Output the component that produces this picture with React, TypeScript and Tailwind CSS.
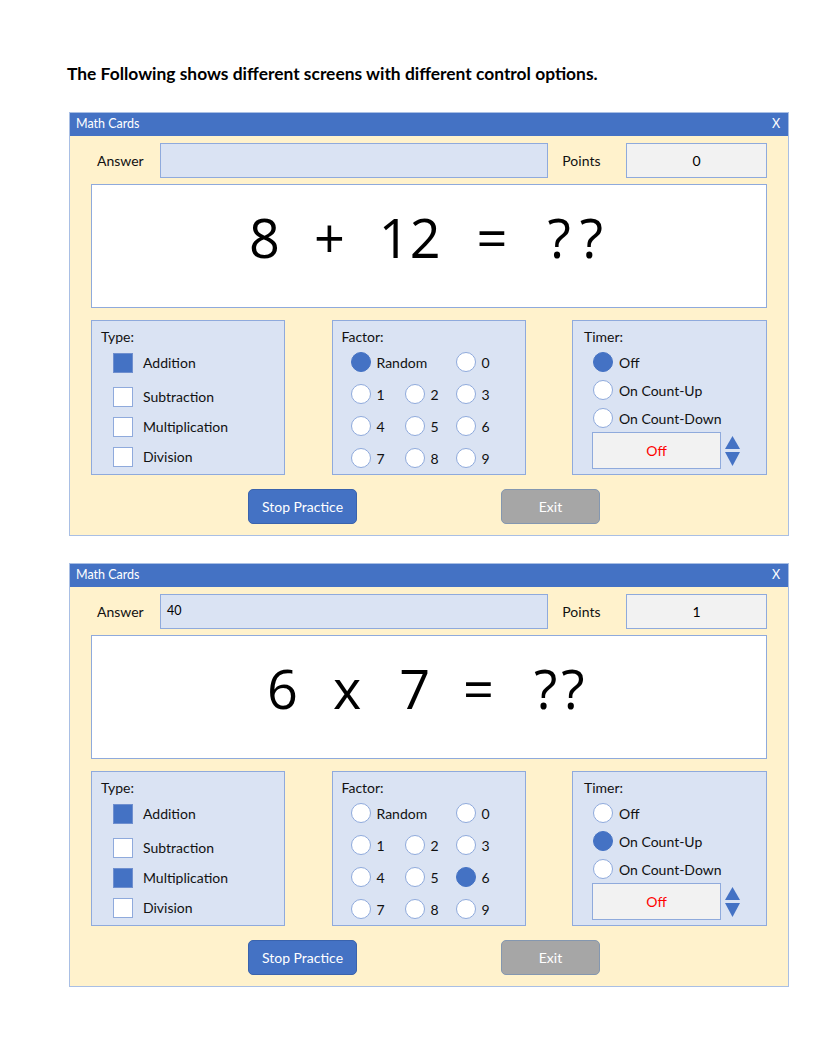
const font = { fontFamily: "Lato, 'Open Sans', sans-serif" };

interface ScreenProps {
  answer: string;
  points: string;
  question: [string, number][];
  types: boolean[];
  factor: string;
  timer: number;
}

const typeNames = ["Addition", "Subtraction", "Multiplication", "Division"];
const factorRows = [
  ["1", "2", "3"],
  ["4", "5", "6"],
  ["7", "8", "9"],
];
const timerNames = ["Off", "On Count-Up", "On Count-Down"];

function Radio({ on }: { on: boolean }) {
  return (
    <span
      className={`inline-block w-[20px] h-[20px] rounded-full shrink-0 ${
        on ? "bg-[#4472c4] border border-[#4472c4]" : "bg-white border-[1.5px] border-[#8faadc]"
      }`}
    />
  );
}

function Check({ on }: { on: boolean }) {
  return (
    <span
      className={`inline-block w-[20px] h-[20px] shrink-0 border ${
        on ? "bg-[#4472c4] border-[#6f8fcf]" : "bg-white border-[#8faadc]"
      }`}
    />
  );
}

function Screen({ answer, points, question, types, factor, timer }: ScreenProps) {
  return (
    <div className="ml-[69px] w-[720px] border border-[#a9bfe4] bg-[#fff2cc]">
      {/* Title bar */}
      <div className="h-[23px] bg-[#4472c4] flex items-center justify-between px-[6px] text-white text-[12.5px]">
        <span>Math Cards</span>
        <span className="pr-[2px]">X</span>
      </div>

      <div className="px-[21px] pt-[7px] pb-[11px]">
        {/* Answer row */}
        <div className="flex items-center h-[35px]">
          <span className="w-[69px] pl-[6px] text-[14px] text-[#111]">Answer</span>
          <div className="w-[389px] h-[35px] bg-[#dae3f3] border border-[#8faadc] flex items-center px-[6px] text-[12.5px] text-black">
            {answer}
          </div>
          <span className="ml-[14px] w-[64px] text-[14px] text-[#111]">Points</span>
          <div className="w-[141px] h-[35px] bg-[#f2f2f2] border border-[#8faadc] flex items-center justify-center text-[14px] text-black">
            {points}
          </div>
        </div>

        {/* Question display */}
        <div className="mt-[6px] h-[124px] bg-white border border-[#8faadc] flex items-start">
          <div
            className="flex text-[54px] text-black leading-none pt-[25px]"
            style={{ fontFamily: "'Open Sans', 'Noto Sans', sans-serif" }}
          >
            {question.map(([s, left], i) => (
              <span key={i} style={{ marginLeft: left }}>
                {s}
              </span>
            ))}
          </div>
        </div>

        {/* Option panels */}
        <div className="mt-[12px] flex justify-between">
          <div className="w-[194px] h-[155px] bg-[#dae3f3] border border-[#8faadc] pl-[9px] pt-[7px]">
            <div className="text-[14px] text-[#111] leading-[18px]">Type:</div>
            <div className="mt-[7px] flex flex-col gap-[11px] pl-[12px]">
              {typeNames.map((t, i) => (
                <div
                  key={t}
                  className={`flex items-center gap-[10px] h-[19px] text-[14px] text-[#111] ${i === 0 ? "mb-[4px]" : ""}`}
                >
                  <Check on={types[i]} />
                  <span>{t}</span>
                </div>
              ))}
            </div>
          </div>

          <div className="w-[194px] h-[155px] bg-[#dae3f3] border border-[#8faadc] pl-[9px] pt-[7px]">
            <div className="text-[14px] text-[#111] leading-[18px]">Factor:</div>
            <div className="mt-[6px] pl-[9px] flex flex-col gap-[12px]">
              <div className="flex items-center h-[20px] text-[14px] text-[#111]">
                <div className="w-[105px] flex items-center gap-[6px]">
                  <Radio on={factor === "Random"} />
                  <span>Random</span>
                </div>
                <div className="flex items-center gap-[6px]">
                  <Radio on={factor === "0"} />
                  <span>0</span>
                </div>
              </div>
              {factorRows.map((row) => (
                <div key={row[0]} className="flex items-center h-[20px] text-[14px] text-[#111]">
                  {row.map((n, j) => (
                    <div key={n} className={`${j === 0 ? "w-[54px]" : j === 1 ? "w-[51px]" : ""} flex items-center gap-[6px]`}>
                      <Radio on={factor === n} />
                      <span>{n}</span>
                    </div>
                  ))}
                </div>
              ))}
            </div>
          </div>

          <div className="w-[195px] h-[155px] bg-[#dae3f3] border border-[#8faadc] pl-[11px] pt-[7px]">
            <div className="text-[14px] text-[#111] leading-[18px]">Timer:</div>
            <div className="mt-[6px] pl-[9px] flex flex-col gap-[8px]">
              {timerNames.map((t, i) => (
                <div key={t} className="flex items-center gap-[6px] h-[20px] text-[14px] text-[#111]">
                  <Radio on={timer === i} />
                  <span>{t}</span>
                </div>
              ))}
            </div>
            <div className="mt-[4px] pl-[8px] flex items-center gap-[3px]">
              <div className="w-[129px] h-[37px] bg-[#f2f2f2] border border-[#8faadc] flex items-center justify-center text-[14px] text-[#ff0000]">
                Off
              </div>
              <svg width="17" height="32" viewBox="0 0 17 32">
                <polygon points="8.5,1 16,14 1,14" fill="#4472c4" />
                <polygon points="1,17 16,17 8.5,31" fill="#4472c4" />
              </svg>
            </div>
          </div>
        </div>

        {/* Buttons */}
        <div className="mt-[14px] flex items-center pl-[157px]">
          <button className="w-[109px] h-[35px] rounded-[5px] bg-[#4472c4] border border-[#3a63ad] text-white text-[14px]">
            Stop Practice
          </button>
          <button className="ml-[144px] w-[99px] h-[35px] rounded-[5px] bg-[#a6a6a6] border-[1.5px] border-[#8497b0] text-white text-[14px]">
            Exit
          </button>
        </div>
      </div>
    </div>
  );
}

export default function App() {
  return (
    <div className="w-[828px] h-[1060px] bg-white pt-[63px]" style={font}>
      <p className="ml-[67px] text-[17.4px] font-bold text-black leading-[22px]">
        The Following shows different screens with different control options.
      </p>
      <div className="mt-[27px]">
        <Screen
          answer=""
          points="0"
          question={[
            ["8", 157],
            ["+", 34],
            ["12", 34],
            ["=", 36],
            ["?", 40],
            ["?", 9],
          ]}
          types={[true, false, false, false]}
          factor="Random"
          timer={0}
        />
      </div>
      <div className="mt-[27px]">
        <Screen
          answer="40"
          points="1"
          question={[
            ["6", 175],
            ["x", 35],
            ["7", 38],
            ["=", 33],
            ["?", 40],
            ["?", 4],
          ]}
          types={[true, false, true, false]}
          factor="6"
          timer={1}
        />
      </div>
    </div>
  );
}
